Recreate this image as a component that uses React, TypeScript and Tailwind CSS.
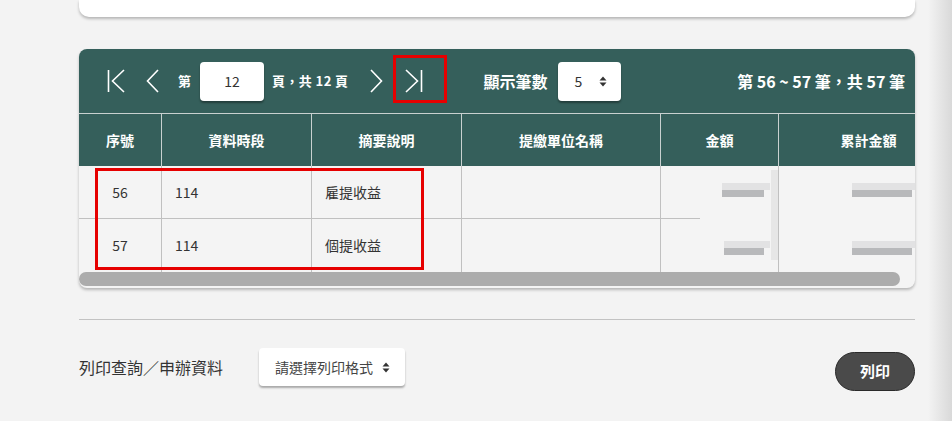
import React from "react";

const font = { fontFamily: '"Noto Sans CJK TC", "Noto Sans", sans-serif' };

function UpDown({ className = "" }: { className?: string }) {
  return (
    <svg width="8" height="11" viewBox="0 0 8 11" className={className}>
      <path d="M4 0.5 L7.5 4.5 L0.5 4.5 Z" fill="#333" />
      <path d="M4 10.5 L7.5 6.5 L0.5 6.5 Z" fill="#333" />
    </svg>
  );
}

function Blur({ w, className = "" }: { w: number; className?: string }) {
  return (
    <div className={"flex flex-col gap-0 " + className}>
      <div className="h-[7px] bg-[#e2e2e3] blur-[0.5px]" style={{ width: w }} />
      <div className="h-[7px] bg-[#b8b9bb] blur-[0.5px]" style={{ width: w - 6 }} />
    </div>
  );
}

export default function App() {
  const cols = [82, 150, 150, 199, 118, 180];
  const heads = ["序號", "資料時段", "摘要說明", "提繳單位名稱", "金額", "累計金額"];
  return (
    <div className="w-[952px] h-[421px] bg-[#f3f3f3] overflow-hidden flex relative" style={font}>
      <div className="ml-[79px] w-[836px] flex flex-col">
        <div className="h-[17px] bg-white rounded-b-[10px] shadow-[0_2px_3px_rgba(0,0,0,0.25)]" />
        <div className="mt-[32px] rounded-[8px] overflow-hidden bg-[#f4f4f4] shadow-[0_2px_3px_rgba(0,0,0,0.25)]">
          <div className="h-[64px] bg-[#355f5b] flex items-center text-white pl-[28px] pr-[10px]">
            <svg width="20" height="26" viewBox="0 0 20 26" className="mr-[19px]">
              <path d="M1.5 2 V24" stroke="white" strokeWidth="1.6" fill="none" />
              <path d="M17 2 L5.5 13 L17 24" stroke="white" strokeWidth="1.6" fill="none" />
            </svg>
            <svg width="14" height="26" viewBox="0 0 14 26" className="mr-[18px]">
              <path d="M12 2 L1.5 13 L12 24" stroke="white" strokeWidth="1.6" fill="none" />
            </svg>
            <span className="text-[13px] font-bold">第</span>
            <div className="ml-[9px] w-[64px] h-[39px] bg-white rounded-[4px] shadow-[0_2px_2px_rgba(0,0,0,0.35)] flex items-center justify-center text-[#333] text-[14px]">
              12
            </div>
            <span className="ml-[8px] text-[13px] font-bold tracking-[0.4px]">頁，共 12 頁</span>
            <svg width="14" height="26" viewBox="0 0 14 26" className="ml-[21px]">
              <path d="M2 2 L12.5 13 L2 24" stroke="white" strokeWidth="1.6" fill="none" />
            </svg>
            <svg width="20" height="26" viewBox="0 0 20 26" className="ml-[20px]">
              <path d="M3 2 L14.5 13 L3 24" stroke="white" strokeWidth="1.6" fill="none" />
              <path d="M18.5 2 V24" stroke="white" strokeWidth="1.6" fill="none" />
            </svg>
            <span className="ml-[60px] text-[16px] font-bold">顯示筆數</span>
            <div className="ml-[11px] w-[63px] h-[39px] bg-white rounded-[4px] shadow-[0_2px_2px_rgba(0,0,0,0.35)] flex items-center pl-[16px] gap-[17px] text-[#333] text-[14px]">
              <span>5</span>
              <UpDown />
            </div>
            <span className="ml-auto text-[16px] font-bold">第 56 ~ 57 筆，共 57 筆</span>
          </div>
          <div className="flex overflow-hidden h-[53px] bg-[#355f5b] border-t border-[#c9d1d0]">
            {heads.map((h, i) => (
              <div
                key={h}
                className={
                  "shrink-0 flex items-center justify-center text-white text-[14px] font-bold " +
                  (i > 0 ? "border-l border-[#c9d1d0]" : "")
                }
                style={{ width: cols[i] }}
              >
                {h}
              </div>
            ))}
          </div>
          {[
            ["56", "114", "雇提收益"],
            ["57", "114", "個提收益"],
          ].map((r, ri) => (
            <div key={ri} className={"flex overflow-hidden h-[53px] text-[14px] text-[#333] relative"}>
              <div className="shrink-0 flex items-center justify-center" style={{ width: cols[0] }}>
                {r[0]}
              </div>
              <div className="shrink-0 flex items-center pl-[13px] border-l border-[#c0c0c0]" style={{ width: cols[1] }}>
                {r[1]}
              </div>
              <div className="shrink-0 flex items-center pl-[13px] border-l border-[#c0c0c0]" style={{ width: cols[2] }}>
                {r[2]}
              </div>
              <div className="shrink-0 border-l border-[#c0c0c0]" style={{ width: cols[3] }} />
              <div className="shrink-0 border-l border-[#c0c0c0] flex items-center justify-end pr-[8px] relative" style={{ width: cols[4] }}>
                <Blur w={ri === 0 ? 48 : 46} className={ri === 0 ? "mt-[-6px]" : "mt-[4px]"} />
                <div className={"absolute right-[0px] w-[7px] bg-[#e6e6e6] " + (ri === 0 ? "top-[4px] bottom-0" : "top-0 bottom-[12px]")} />
              </div>
              <div className="shrink-0 border-l border-[#c0c0c0] flex items-center pl-[73px]" style={{ width: cols[5] }}>
                <Blur w={66} className={ri === 0 ? "mt-[-6px]" : "mt-[4px]"} />
              </div>
              {ri === 0 && <div className="absolute left-0 bottom-0 w-[621px] h-px bg-[#c0c0c0]" />}
            </div>
          ))}
          <div className="h-[16px] flex items-start">
            <div className="w-[821px] h-[14px] rounded-full bg-[#acacac]" />
          </div>
        </div>
        <div className="mt-[31px] h-px bg-[#c2c2c2]" />
        <div className="mt-[23px] flex items-center">
          <span className="text-[16px] text-[#333]">列印查詢／申辦資料</span>
          <div className="ml-[36px] w-[146px] h-[38px] bg-white rounded-[4px] shadow-[0_2px_2px_rgba(0,0,0,0.3)] flex items-center pl-[16px] gap-[9px] text-[14px] text-[#444]">
            <span>請選擇列印格式</span>
            <UpDown />
          </div>
          <button className="ml-auto mt-[9px] w-[80px] h-[39px] rounded-full bg-[#4a4a4a] border border-[#2a2a2a] text-white text-[15px] font-bold">
            列印
          </button>
        </div>
      </div>
      <div className="ml-auto w-[24px] h-full bg-gradient-to-r from-[#f3f3f3] to-[#d9d9d9]" />
      <div className="absolute left-[393px] top-[55px] w-[54px] h-[48px] border-[3px] border-[#e60000]" />
      <div className="absolute left-[95px] top-[168px] w-[329px] h-[102px] border-[3px] border-[#e60000]" />
    </div>
  );
}
